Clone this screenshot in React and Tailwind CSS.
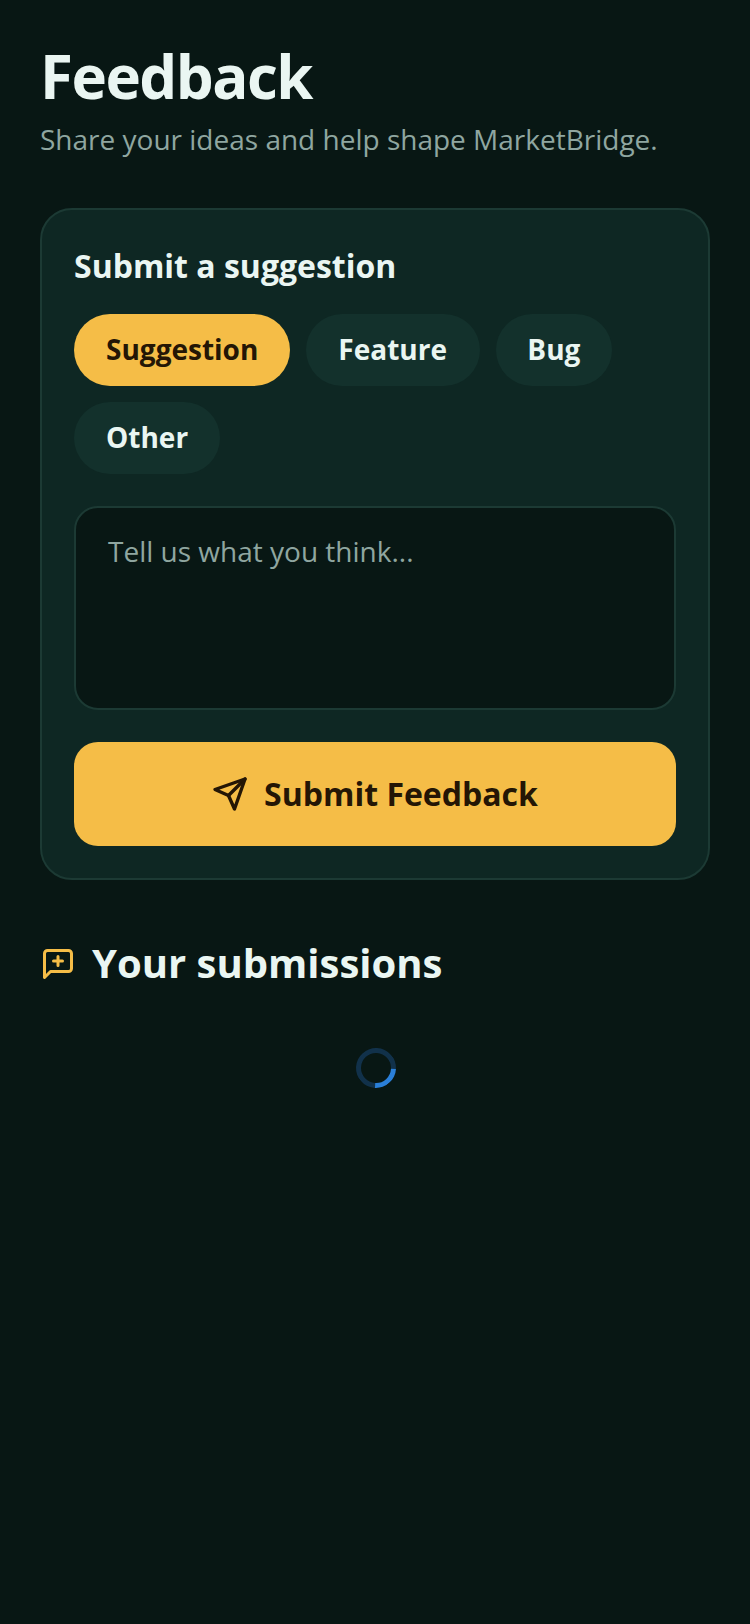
import React from "react";
import { FiSend } from "react-icons/fi";

const chips = [
  { label: "Suggestion", cls: "px-8 bg-[#f5bd47] text-[#241605]" },
  { label: "Feature", cls: "w-[174px] pl-8 text-left bg-[#13312c] text-[#eaf6f2]" },
  { label: "Bug", cls: "w-[116px] pl-[31px] text-left bg-[#13312c] text-[#eaf6f2]" },
  { label: "Other", cls: "px-8 bg-[#13312c] text-[#eaf6f2]" },
];

function MessagePlus() {
  return (
    <svg className="mt-0.5" width="36" height="36" viewBox="0 0 24 24" fill="none" stroke="#f5bd47" strokeWidth="2" strokeLinecap="round" strokeLinejoin="round">
      <path d="M21 15a2 2 0 0 1-2 2H7l-4 4V5a2 2 0 0 1 2-2h14a2 2 0 0 1 2 2z" />
      <path d="M12 7v6M9 10h6" />
    </svg>
  );
}

export default function App() {
  return (
    <div className="min-h-[1624px] bg-[#081714] px-10 pt-10 font-['Open_Sans',sans-serif] text-[#eaf6f2]">
      <h1 className="text-[60px] leading-[72px] font-bold tracking-[-1.5px]">Feedback</h1>
      <p className="mt-[9px] text-[28px] leading-[36px] text-[#8fa6a0]">Share your ideas and help shape MarketBridge.</p>

      <section className="mt-[51px] rounded-[32px] border-2 border-[#1c3a34] bg-[#0e2723] p-8">
        <h2 className="text-[32px] leading-[48px] font-bold">Submit a suggestion</h2>
        <div className="mt-6 flex flex-wrap gap-4">
          {chips.map((c) => (
            <button key={c.label} className={`h-[72px] rounded-full pb-0.5 text-[28px] font-bold ${c.cls}`}>
              {c.label}
            </button>
          ))}
        </div>
        <textarea
          readOnly
          placeholder="Tell us what you think..."
          className="mt-8 block h-[204px] w-full resize-none rounded-[24px] border-2 border-[#1c3a34] bg-[#081714] px-8 pt-[23px] pb-6 text-[28px] leading-[40px] outline-none placeholder:text-[#8fa6a0]"
        />
        <button className="mt-8 flex h-[104px] w-full items-center justify-center gap-4 rounded-[24px] bg-[#f5bd47] text-[32px] font-bold text-[#241605]">
          <FiSend size={36} strokeWidth={2.25} />
          Submit Feedback
        </button>
      </section>

      <div className="mt-[53px] flex items-center gap-4">
        <MessagePlus />
        <h2 className="text-[40px] leading-[60px] font-bold">Your submissions</h2>
      </div>

      <div className="mt-[55px] flex justify-center pl-0.5">
        <div className="h-10 w-10 rotate-[48deg] rounded-full border-[5px] border-[#11314a] border-r-[#2a7fd8]" />
      </div>
    </div>
  );
}
